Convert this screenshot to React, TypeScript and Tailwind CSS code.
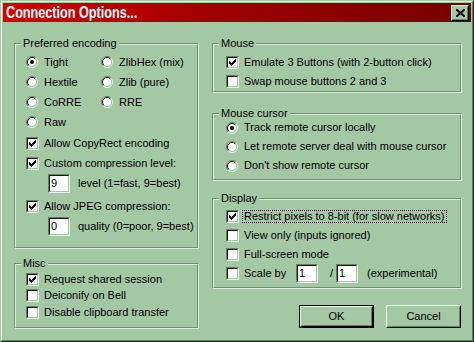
import React from 'react';

const Check = ({ checked = false }: { checked?: boolean }) => (
  <span className="block w-[13px] h-[13px] shrink-0 border border-t-[#5e845e] border-l-[#5e845e] border-b-[#e6f4e6] border-r-[#e6f4e6]">
    <span className="block w-full h-full bg-white border border-t-[#101810] border-l-[#101810] border-b-[#a4c8a4] border-r-[#a4c8a4]">
      {checked && (
        <svg width="9" height="9" viewBox="0 0 9 9" shapeRendering="crispEdges" className="block">
          {[2, 3, 4, 3, 2, 1, 0].map((s, i) => (
            <rect key={i} x={1 + i} y={1 + s} width="1" height="3" fill="#000" />
          ))}
        </svg>
      )}
    </span>
  </span>
);

const Radio = ({ checked = false }: { checked?: boolean }) => (
  <span className="flex w-[13px] h-[13px] shrink-0 items-center">
    <svg width="12" height="12" viewBox="0 0 12 12" className="block">
      <circle cx="6" cy="6" r="4.6" fill="#fff" />
      <path d="M2.11 9.89 A5.5 5.5 0 0 1 9.89 2.11" stroke="#5e845e" fill="none" />
      <path d="M9.89 2.11 A5.5 5.5 0 0 1 2.11 9.89" stroke="#e6f4e6" fill="none" />
      <path d="M2.82 9.18 A4.5 4.5 0 0 1 9.18 2.82" stroke="#101810" fill="none" />
      <path d="M9.18 2.82 A4.5 4.5 0 0 1 2.82 9.18" stroke="#a4c8a4" fill="none" />
      {checked && <circle cx="6" cy="6" r="2" fill="#000" />}
    </svg>
  </span>
);

const Opt = ({
  kind,
  checked = false,
  label,
  focus = false,
  className = '',
}: {
  kind: 'radio' | 'check';
  checked?: boolean;
  label: string;
  focus?: boolean;
  className?: string;
}) => (
  <div className={`flex items-center ${className}`}>
    {kind === 'radio' ? <Radio checked={checked} /> : <Check checked={checked} />}
    <span
      className={`ml-[3px] px-[1px] border leading-[11px] whitespace-nowrap ${
        focus ? 'border-dotted border-black' : 'border-transparent'
      }`}
    >
      {label}
    </span>
  </div>
);

const Field = ({ value }: { value: string }) => (
  <span className="block w-[22px] h-[19px] shrink-0 border border-t-[#5e845e] border-l-[#5e845e] border-b-[#e6f4e6] border-r-[#e6f4e6]">
    <span className="flex items-center w-full h-full bg-white border border-t-[#101810] border-l-[#101810] border-b-[#a4c8a4] border-r-[#a4c8a4] pl-[1px] leading-[13px]">
      {value}
    </span>
  </span>
);

const Group = ({
  label,
  className,
  children,
}: {
  label: string;
  className: string;
  children: React.ReactNode;
}) => (
  <div className={`relative border border-t-[#6b926b] border-l-[#6b926b] border-b-[#dcefdc] border-r-[#dcefdc] ${className}`}>
    <div className="h-full border border-t-[#dcefdc] border-l-[#dcefdc] border-b-[#6b926b] border-r-[#6b926b]">
      {children}
    </div>
    <span className="absolute left-[6px] top-[-7px] bg-[#a4c8a4] px-[2px] leading-[13px] whitespace-nowrap">
      {label}
    </span>
  </div>
);

export default function App() {
  return (
    <div className="w-[474px] h-[342px] bg-[#a4c8a4] text-black text-[11px] font-['Liberation_Sans',Arial,sans-serif] border border-t-[#a4c8a4] border-l-[#a4c8a4] border-b-[#1c2c1c] border-r-[#1c2c1c]">
      <div className="w-full h-full p-[1px] border border-t-[#e6f4e6] border-l-[#e6f4e6] border-b-[#5e845e] border-r-[#5e845e]">
        {/* Title bar */}
        <div className="h-[19px] flex items-center justify-between bg-[linear-gradient(to_right,#d80000,#a00000_45%,#760000)] pl-[3px] pr-[2px]">
          <span className="inline-block origin-left scale-x-[0.79] text-white font-bold text-[16px] leading-[19px] whitespace-nowrap">
            Connection Options...
          </span>
          <span className="w-[18px] h-[16px] border border-t-[#e6f4e6] border-l-[#e6f4e6] border-b-black border-r-black bg-[#a4c8a4]">
            <span className="flex items-center justify-center w-full h-full border border-transparent border-b-[#5e845e] border-r-[#5e845e]">
              <svg width="9" height="8" viewBox="0 0 9 8" className="block">
                <path d="M1 1 L8 7 M8 1 L1 7" stroke="#000" strokeWidth="2" strokeLinecap="square" />
              </svg>
            </span>
          </span>
        </div>

        {/* Content */}
        <div className="flex pl-[11px] pr-[9px] pt-[21px] gap-[13px]">
          {/* Left column */}
          <div className="flex flex-col w-[185px]">
            <Group label="Preferred encoding" className="h-[206px]">
              <div className="pt-[7px] pl-[10px] flex flex-col">
                <div className="grid grid-cols-[75px_1fr]">
                  <Opt kind="radio" checked label="Tight" className="h-[20px]" />
                  <Opt kind="radio" label="ZlibHex (mix)" className="h-[20px]" />
                  <Opt kind="radio" label="Hextile" className="h-[20px]" />
                  <Opt kind="radio" label="Zlib (pure)" className="h-[20px]" />
                  <Opt kind="radio" label="CoRRE" className="h-[20px]" />
                  <Opt kind="radio" label="RRE" className="h-[20px]" />
                  <Opt kind="radio" label="Raw" className="h-[20px]" />
                </div>
                <Opt kind="check" checked label="Allow CopyRect encoding" className="h-[20px] mt-[1px]" />
                <Opt kind="check" checked label="Custom compression level:" className="h-[20px]" />
                <div className="flex items-center h-[19px] mt-[1px] pl-[22px]">
                  <Field value="9" />
                  <span className="ml-[8px] whitespace-nowrap">level (1=fast, 9=best)</span>
                </div>
                <Opt kind="check" checked label="Allow JPEG compression:" className="h-[20px] mt-[3px]" />
                <div className="flex items-center h-[19px] mt-[1px] pl-[22px]">
                  <Field value="0" />
                  <span className="ml-[8px] whitespace-nowrap">quality (0=poor, 9=best)</span>
                </div>
              </div>
            </Group>

            <Group label="Misc" className="h-[66px] mt-[14px]">
              <div className="pt-[6px] pl-[10px] flex flex-col">
                <Opt kind="check" checked label="Request shared session" className="h-[16px]" />
                <Opt kind="check" label="Deiconify on Bell" className="h-[17px]" />
                <Opt kind="check" label="Disable clipboard transfer" className="h-[17px]" />
              </div>
            </Group>
          </div>

          {/* Right column */}
          <div className="flex flex-col w-[250px]">
            <Group label="Mouse" className="h-[50px]">
              <div className="pt-[8px] pl-[12px] flex flex-col">
                <Opt kind="check" checked label="Emulate 3 Buttons (with 2-button click)" className="h-[19px]" />
                <Opt kind="check" label="Swap mouse buttons 2 and 3" className="h-[19px]" />
              </div>
            </Group>

            <Group label="Mouse cursor" className="h-[68px] mt-[20px]">
              <div className="pt-[3px] pl-[12px] flex flex-col">
                <Opt kind="radio" checked label="Track remote cursor locally" className="h-[19px]" />
                <Opt kind="radio" label="Let remote server deal with mouse cursor" className="h-[19px]" />
                <Opt kind="radio" label="Don't show remote cursor" className="h-[19px]" />
              </div>
            </Group>

            <Group label="Display" className="h-[91px] mt-[17px]">
              <div className="pt-[7px] pl-[12px] flex flex-col">
                <Opt kind="check" checked focus label="Restrict pixels to 8-bit (for slow networks)" className="h-[19px]" />
                <Opt kind="check" label="View only (inputs ignored)" className="h-[19px]" />
                <Opt kind="check" label="Full-screen mode" className="h-[19px]" />
                <div className="flex items-center h-[19px]">
                  <Check />
                  <span className="ml-[3px] w-[54px] px-[2px] whitespace-nowrap">Scale by</span>
                  <Field value="1" />
                  <span className="w-[18px] pl-[12px]">/</span>
                  <Field value="1" />
                  <span className="ml-[9px] whitespace-nowrap">(experimental)</span>
                </div>
              </div>
            </Group>

            <div className="flex justify-end gap-[12px] mt-[16px] pr-[1px]">
              <button className="w-[75px] h-[23px] border border-black p-0 bg-[#a4c8a4]">
                <span className="block w-full h-full border border-t-[#e6f4e6] border-l-[#e6f4e6] border-b-black border-r-black">
                  <span className="flex items-center justify-center w-full h-full border border-transparent border-b-[#5e845e] border-r-[#5e845e] leading-[11px]">
                    OK
                  </span>
                </span>
              </button>
              <button className="w-[75px] h-[23px] p-0 bg-[#a4c8a4] border border-t-[#e6f4e6] border-l-[#e6f4e6] border-b-black border-r-black">
                <span className="flex items-center justify-center w-full h-full border border-transparent border-b-[#5e845e] border-r-[#5e845e] leading-[11px]">
                  Cancel
                </span>
              </button>
            </div>
          </div>
        </div>
      </div>
    </div>
  );
}
